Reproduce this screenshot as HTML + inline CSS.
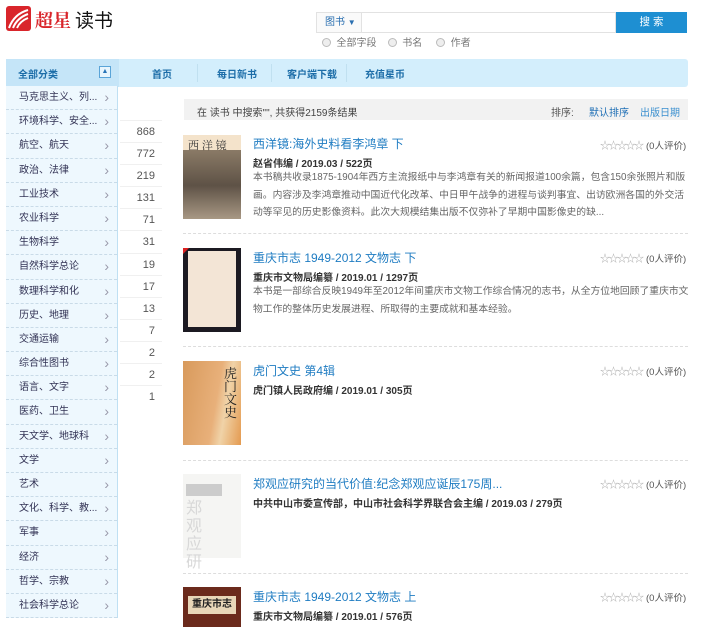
<!DOCTYPE html>
<html><head><meta charset="utf-8"><style>
*{margin:0;padding:0;box-sizing:border-box}
body{width:720px;height:624px;overflow:hidden;background:#fff;font-family:"Liberation Sans","Noto Sans CJK SC",sans-serif;font-size:11px;color:#333;position:relative}
.a{position:absolute;white-space:nowrap}
.side{position:absolute;left:6px;top:86px;width:112px;background:#eef8fe;border-right:1px solid #bfe0f3}
.side div{height:24.2px;line-height:24px;padding-left:13px;color:#335;border-bottom:1px dashed #c9dbe8;position:relative;font-size:10px}
.side div:after{content:"›";position:absolute;right:8px;top:-1px;color:#99a;font-size:14px}
.cnt{position:absolute;left:120px;top:120px;width:42px}
.cnt div{height:22.1px;line-height:22px;text-align:right;color:#555;border-top:1px solid #f0f0f0;padding-right:7px}
.title{color:#1f7cc2;font-size:12px}
.au{font-weight:bold;color:#333;font-size:10px}
.ds{color:#666;font-size:9.8px;line-height:17.5px;white-space:normal;width:436px}
.st{color:#aaa;font-size:10px;letter-spacing:-1.5px}
.rv{color:#555;font-size:9.5px}
.sep{position:absolute;left:183px;width:505px;border-top:1px dashed #ddd}
.nav{color:#1c6da8;font-weight:bold;font-size:10px}
</style></head><body>
<div class="a" style="left:6px;top:6px;width:25px;height:25px;background:#d9252b;border-radius:3px"></div>
<svg class="a" style="left:6px;top:6px" width="25" height="25"><path d="M3 22 Q8 8 22 4 M7 22 Q11 12 22 8 M11 22 Q14 15 22 12" stroke="#fff" stroke-width="2" fill="none"/></svg>
<div class="a" style="left:35px;top:7px;font-size:18px;color:#d9252b;font-weight:bold;font-family:'Noto Serif CJK SC',serif">超星</div>
<div class="a" style="left:75px;top:6px;font-size:19px;color:#111">读书</div>

<div class="a" style="left:316px;top:12px;width:300px;height:21px;border:1px solid #e2e2e2;background:#fff"></div>
<div class="a" style="left:316px;top:12px;width:46px;height:21px;border:1px solid #e2e2e2;background:#fafafa;color:#2a6fb0;font-size:10px;line-height:19px;padding-left:8px">图书 <span style="font-size:8px">▼</span></div>
<div class="a" style="left:616px;top:12px;width:71px;height:21px;background:#1e8fd2;color:#fff;text-align:center;line-height:21px;font-size:10.5px">搜 索</div>
<div class="a" style="left:322px;top:38px;color:#777;font-size:10px;line-height:12px"><span style="display:inline-block;width:9px;height:9px;border:1px solid #bbb;border-radius:50%;background:#eee;vertical-align:-1px"></span>&nbsp; 全部字段 &nbsp;&nbsp;&nbsp;<span style="display:inline-block;width:9px;height:9px;border:1px solid #bbb;border-radius:50%;background:#eee;vertical-align:-1px"></span>&nbsp; 书名 &nbsp;&nbsp;&nbsp;&nbsp;<span style="display:inline-block;width:9px;height:9px;border:1px solid #bbb;border-radius:50%;background:#eee;vertical-align:-1px"></span>&nbsp; 作者</div>

<div class="a" style="left:6px;top:59px;width:682px;height:28px;background:#d3eefc;border-radius:3px"></div>
<div class="a" style="left:6px;top:59px;width:113px;height:28px;background:#c5e5f8"></div>
<div class="a nav" style="left:18px;top:66px">全部分类</div>
<div class="a" style="left:99px;top:66px;width:12px;height:12px;border:1px solid #5aa4d8;background:#e8f5fd;color:#2a75b8;font-size:7px;text-align:center;line-height:10px">▲</div>
<div class="a nav" style="left:152px;top:66px">首页</div>
<div class="a nav" style="left:217px;top:66px">每日新书</div>
<div class="a nav" style="left:287px;top:66px">客户端下载</div>
<div class="a nav" style="left:365px;top:66px">充值星币</div>
<div class="a" style="left:197px;top:64px;height:18px;border-left:1px solid #c0e0f0"></div>
<div class="a" style="left:271px;top:64px;height:18px;border-left:1px solid #c0e0f0"></div>
<div class="a" style="left:346px;top:64px;height:18px;border-left:1px solid #c0e0f0"></div>

<div class="side">
<div>马克思主义、列...</div><div>环境科学、安全...</div><div>航空、航天</div><div>政治、法律</div><div>工业技术</div><div>农业科学</div><div>生物科学</div><div>自然科学总论</div><div>数理科学和化</div><div>历史、地理</div><div>交通运输</div><div>综合性图书</div><div>语言、文字</div><div>医药、卫生</div><div>天文学、地球科</div><div>文学</div><div>艺术</div><div>文化、科学、教...</div><div>军事</div><div>经济</div><div>哲学、宗教</div><div>社会科学总论</div>
</div>
<div class="cnt"><div>868</div><div>772</div><div>219</div><div>131</div><div>71</div><div>31</div><div>19</div><div>17</div><div>13</div><div>7</div><div>2</div><div>2</div><div>1</div></div>

<div class="a" style="left:184px;top:99px;width:504px;height:21px;background:#f2f2f2"></div>
<div class="a" style="left:197px;top:104px;color:#444;font-size:10px">在 读书 中搜索"", 共获得2159条结果</div>
<div class="a" style="left:551px;top:104px;color:#555;font-size:10px">排序:</div>
<div class="a" style="left:589px;top:104px;color:#1f6fb5;font-size:10px">默认排序</div>
<div class="a" style="left:640px;top:104px;color:#3a8fcf;font-size:10px">出版日期</div>

<!-- book 1 -->
<div class="a" style="left:183px;top:135px;width:58px;height:84px;background:linear-gradient(#f4e3cb 0 18%,#8a7a66 18%,#5e5246 60%,#a89884)"></div>
<div class="a" style="left:188px;top:137px;font-size:11px;color:#333;font-family:'Noto Serif CJK SC',serif">西 洋 镜</div>
<div class="a title" style="left:253px;top:135px">西洋镜:海外史料看李鸿章 下</div>
<div class="a au" style="left:253px;top:155px">赵省伟编 / 2019.03 / 522页</div>
<div class="a ds" style="left:253px;top:169px">本书稿共收录1875-1904年西方主流报纸中与李鸿章有关的新闻报道100余篇，包含150余张照片和版画。内容涉及李鸿章推动中国近代化改革、中日甲午战争的进程与谈判事宜、出访欧洲各国的外交活动等罕见的历史影像资料。此次大规模结集出版不仅弥补了早期中国影像史的缺...</div>
<div class="a st" style="left:600px;top:137px">☆☆☆☆☆</div><div class="a rv" style="left:646px;top:138px">(0人评价)</div>
<div class="sep" style="top:233px"></div>

<!-- book 2 -->
<div class="a" style="left:183px;top:248px;width:58px;height:84px;background:#1c1a22"></div>
<div class="a" style="left:188px;top:251px;width:48px;height:76px;background:#f3e5d6"></div>
<div class="a" style="left:183px;top:248px;width:0;height:0;border-top:6px solid #d22;border-right:6px solid transparent"></div>
<div class="a title" style="left:253px;top:249px">重庆市志 1949-2012 文物志 下</div>
<div class="a au" style="left:253px;top:269px">重庆市文物局编纂 / 2019.01 / 1297页</div>
<div class="a ds" style="left:253px;top:283px;width:440px">本书是一部综合反映1949年至2012年间重庆市文物工作综合情况的志书，从全方位地回顾了重庆市文物工作的整体历史发展进程、所取得的主要成就和基本经验。</div>
<div class="a st" style="left:600px;top:250px">☆☆☆☆☆</div><div class="a rv" style="left:646px;top:251px">(0人评价)</div>
<div class="sep" style="top:346px"></div>

<!-- book 3 -->
<div class="a" style="left:183px;top:361px;width:58px;height:84px;background:linear-gradient(100deg,#d89a5c,#e8b07a 55%,#f0d3a8 70%,#e49a50)"></div>
<div class="a" style="left:224px;top:366px;font-size:13px;line-height:13px;color:#222;white-space:normal;width:14px;font-family:'Noto Serif CJK SC',serif">虎门文史</div>
<div class="a title" style="left:253px;top:362px">虎门文史 第4辑</div>
<div class="a au" style="left:253px;top:382px">虎门镇人民政府编 / 2019.01 / 305页</div>
<div class="a st" style="left:600px;top:363px">☆☆☆☆☆</div><div class="a rv" style="left:646px;top:364px">(0人评价)</div>
<div class="sep" style="top:460px"></div>

<!-- book 4 -->
<div class="a" style="left:183px;top:474px;width:58px;height:84px;background:#f5f5f3"></div>
<div class="a" style="left:186px;top:484px;width:36px;height:12px;background:#ccc"></div>
<div class="a" style="left:186px;top:500px;font-size:16px;line-height:18px;color:#d8d8d8;white-space:normal;width:18px">郑观应研</div>
<div class="a title" style="left:253px;top:475px">郑观应研究的当代价值:纪念郑观应诞辰175周...</div>
<div class="a au" style="left:253px;top:495px">中共中山市委宣传部，中山市社会科学界联合会主编 / 2019.03 / 279页</div>
<div class="a st" style="left:600px;top:476px">☆☆☆☆☆</div><div class="a rv" style="left:646px;top:477px">(0人评价)</div>
<div class="sep" style="top:573px"></div>

<!-- book 5 -->
<div class="a" style="left:183px;top:587px;width:58px;height:40px;background:#6b2a1c"></div>
<div class="a" style="left:188px;top:596px;width:48px;height:18px;background:#e8d6b8;color:#222;font-size:10px;text-align:center;line-height:18px;font-weight:bold">重庆市志</div>
<div class="a title" style="left:253px;top:588px">重庆市志 1949-2012 文物志 上</div>
<div class="a au" style="left:253px;top:608px">重庆市文物局编纂 / 2019.01 / 576页</div>
<div class="a st" style="left:600px;top:589px">☆☆☆☆☆</div><div class="a rv" style="left:646px;top:590px">(0人评价)</div>
</body></html>
